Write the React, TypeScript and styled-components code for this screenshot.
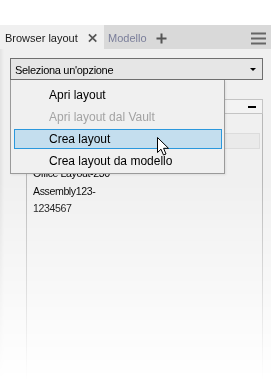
import React from "react";
import styled, { createGlobalStyle } from "styled-components";

const GlobalStyle = createGlobalStyle`
  *, *::before, *::after {
    box-sizing: border-box;
  }
  html, body {
    margin: 0;
    padding: 0;
    background: #ffffff;
  }
  body {
    font-family: "Liberation Sans", Arial, sans-serif;
    color: #000000;
  }
`;

const Screen = styled.div`
  position: relative;
  width: 272px;
  height: 380px;
  padding-top: 25px;
  overflow: hidden;
`;

const Panel = styled.div`
  width: 271px;
  height: 355px;
  overflow: hidden;
  background: #f0f0f0;
  box-shadow: inset 2px 0 3px rgba(0, 0, 0, 0.06);
  display: flex;
  flex-direction: column;
  -webkit-mask-image: linear-gradient(to bottom, #000 0%, #000 44%, transparent 100%);
  mask-image: linear-gradient(to bottom, #000 0%, #000 44%, transparent 100%);
`;

const TabBar = styled.div`
  display: flex;
  align-items: stretch;
  flex-shrink: 0;
  height: 24px;
  background: #d9d9d9;
`;

const Tab = styled.div<{ active?: boolean }>`
  display: flex;
  align-items: center;
  gap: ${(p) => (p.active ? "10px" : "9px")};
  padding: 2px ${(p) => (p.active ? "7px" : "0")} 0 ${(p) => (p.active ? "5px" : "4px")};
  width: ${(p) => (p.active ? "104px" : "auto")};
  background: ${(p) => (p.active ? "#f0f0f0" : "transparent")};
  color: ${(p) => (p.active ? "#1a1a1a" : "#7a7e9a")};
  font-size: 11px;
  white-space: nowrap;
`;

const Spacer = styled.div`
  flex: 1;
`;

const MenuIcon = styled.div`
  display: flex;
  align-items: center;
  padding: 2px 5px 0 0;
`;

const Body = styled.div`
  display: flex;
  flex-direction: column;
  flex: 1;
  min-height: 0;
  padding: 9px 8px 0 10px;
`;

const DropdownWrap = styled.div`
  position: relative;
  z-index: 2;
  flex-shrink: 0;
`;

const Select = styled.div`
  display: flex;
  align-items: center;
  justify-content: space-between;
  height: 22px;
  border: 1px solid #6f6f6f;
  background: #e6e6e6;
  padding: 1px 6px 0 4px;
  font-size: 11px;
  letter-spacing: -0.3px;
`;

const Caret = styled.div`
  width: 0;
  height: 0;
  border-left: 3px solid transparent;
  border-right: 3px solid transparent;
  border-top: 3px solid #000;
`;

const Menu = styled.div`
  position: absolute;
  top: 22px;
  left: 0;
  width: 215px;
  padding: 4px 2px 1px 3px;
  background: #f0f0f0;
  border: 1px solid #9a9a9a;
  border-top: none;
  box-shadow: 1px 1px 2px rgba(0, 0, 0, 0.08);
`;

const MenuItem = styled.div<{ disabled?: boolean; hot?: boolean }>`
  display: flex;
  align-items: center;
  height: ${(p) => (p.hot ? "20px" : "22px")};
  margin: ${(p) => (p.hot ? "1px 0" : "0")};
  padding-left: 34px;
  border: 1px solid ${(p) => (p.hot ? "#2b98dd" : "transparent")};
  background: ${(p) => (p.hot ? "#c4deee" : "transparent")};
  color: ${(p) => (p.disabled ? "#a3a3a3" : "#000")};
  font-size: 12px;
`;

const SectionHeader = styled.div`
  display: flex;
  align-items: center;
  justify-content: flex-end;
  flex-shrink: 0;
  margin-top: 19px;
  height: 15px;
  border: 1px solid #c4c4c4;
  background: #f3f3f3;
  padding-right: 6px;
`;

const Collapse = styled.div`
  width: 8px;
  height: 2px;
  background: #000;
`;

const Tree = styled.div`
  display: flex;
  flex-direction: column;
  flex: 1;
  margin-left: 16px;
  border-left: 1px solid #b8b8b8;
  border-right: 1px solid #b8b8b8;
  padding: 19px 2px 0 6px;
`;

const TreeRow = styled.div`
  height: 16px;
  margin-left: -3px;
  border: 1px solid #dcdcdc;
  background: #eaeaea;
`;

const TreeText = styled.div`
  margin-top: 16px;
  font-size: 10.6px;
  letter-spacing: -0.4px;
  line-height: 17.5px;
  color: #000;
`;

const Cursor = styled.svg`
  position: absolute;
  left: 157px;
  top: 137px;
  z-index: 5;
`;

const CloseIcon = () => (
  <svg width="10" height="10" viewBox="0 0 10 10">
    <path d="M1 1 L9 9 M9 1 L1 9" stroke="#555" strokeWidth="1.8" />
  </svg>
);

const PlusIcon = () => (
  <svg width="11" height="11" viewBox="0 0 11 11">
    <path d="M5.5 0.5 V10.5 M0.5 5.5 H10.5" stroke="#555" strokeWidth="2" />
  </svg>
);

const Hamburger = () => (
  <svg width="15" height="13" viewBox="0 0 15 13">
    <path d="M0 1.5 H15 M0 6.5 H15 M0 11.5 H15" stroke="#666" strokeWidth="2" />
  </svg>
);

const menuItems = [
  { label: "Apri layout" },
  { label: "Apri layout dal Vault", disabled: true },
  { label: "Crea layout", hot: true },
  { label: "Crea layout da modello" },
];

export default function App() {
  return (
    <>
      <GlobalStyle />
      <Screen>
        <Panel>
          <TabBar>
            <Tab active>
              Browser layout
              <CloseIcon />
            </Tab>
            <Tab>
              Modello
              <PlusIcon />
            </Tab>
            <Spacer />
            <MenuIcon>
              <Hamburger />
            </MenuIcon>
          </TabBar>
          <Body>
            <DropdownWrap>
              <Select>
                Seleziona un'opzione
                <Caret />
              </Select>
              <Menu>
                {menuItems.map((item) => (
                  <MenuItem key={item.label} disabled={item.disabled} hot={item.hot}>
                    {item.label}
                  </MenuItem>
                ))}
              </Menu>
            </DropdownWrap>
            <SectionHeader>
              <Collapse />
            </SectionHeader>
            <Tree>
              <TreeRow />
              <TreeText>
                Office Layout-230
                <br />
                Assembly123-
                <br />
                1234567
              </TreeText>
            </Tree>
          </Body>
        </Panel>
        <Cursor width="13" height="20" viewBox="0 0 13 20">
          <polygon
            points="0.5,0.5 0.5,15.5 4,12.2 6.5,18 9,17 6.6,11.3 11.5,11.3"
            fill="#fff"
            stroke="#000"
            strokeWidth="1"
            strokeLinejoin="miter"
          />
        </Cursor>
      </Screen>
    </>
  );
}
